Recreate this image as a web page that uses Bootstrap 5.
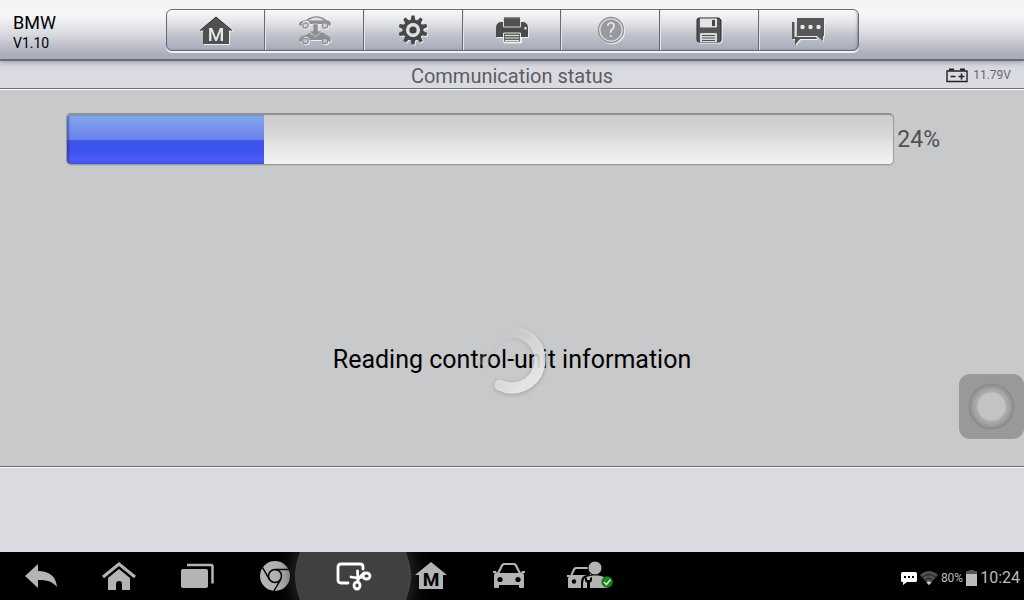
<!DOCTYPE html>
<html lang="en">
<head>
<meta charset="utf-8">
<meta name="viewport" content="width=device-width, initial-scale=1">
<title>BMW – Communication status</title>
<link href="https://cdn.jsdelivr.net/npm/bootstrap@5.3.0/dist/css/bootstrap.min.css" rel="stylesheet">
<style>
  body { font-family: Roboto, "Liberation Sans", sans-serif; background: #c8c9cb; color: #000; }
  svg { display: block; overflow: visible; }
  .topbar { height: 61px; background: linear-gradient(#f4f4f4 0, #f8f8f8 14px, #d9dae0 34px, #acaebd 54px, #a9abbb 59px); border-bottom: 2px solid #6b6b7e; position: relative; z-index: 1; box-shadow: 0 1px 6px rgba(80,80,100,.55); }
  .side { flex: 1 1 0; min-width: 0; }
  .vehicle { padding: 11px 0 0 13px; }
  .vehicle-name { font-size: 18px; line-height: 24px; }
  .vehicle-version { font-size: 14px; line-height: 16px; }
  .tools { flex: 0 1 693px; height: 42px; margin-top: 9px; border: 1px solid #666a73; border-radius: 6px; background: linear-gradient(#fafafa 0, #e4e5e9 12px, #bfc1ca 26px, #a8acb9 40px); box-shadow: 0 2px 0 #eef0f4, inset 0 1px 0 #fff, inset -1px 0 2px rgba(90,90,110,.5); }
  .tools > .tool { flex: 1 1 0; min-width: 0; border: 0; border-radius: 0; padding: 0; display: flex; align-items: center; justify-content: center; }
  .tools > .tool + .tool { border-left: 1px solid #666a73; margin-left: 0; box-shadow: inset 1px 0 0 #e4e6eb; }
  .tools > .tool:disabled { opacity: 1; border-color: #666a73; }
  .tool svg { filter: drop-shadow(1px 1px 0 #eceef2); }
  .subbar { height: 28px; background: #dadbe1; border-bottom: 1px solid #6c7177; box-shadow: 0 1px 0 #fff; font-size: 20px; line-height: 28px; color: #5c5c5f; padding-top: 1px; position: relative; }
  .volt { font-size: 12px; color: #66666a; padding-right: 13px; gap: 5px; }
  .reading { padding: 24px 84px 0 66px; gap: 3px; }
  .meter { height: 52px; border: 1px solid #989a9c; border-top: 2px solid #8e9092; border-radius: 5px; background: linear-gradient(#cbcbcb 0, #dbdbdb 50%, #e0e0e0 52%, #f3f3f3 100%); box-shadow: 0 1px 0 #b5b7b9; }
  .meter .progress-bar { background: linear-gradient(#84a7ea 0, #6e88ec 40%, #6983ee 50%, #3c58e9 51%, #3c51ed 72%, #4c5bf2 90%, #4654ee 100%); box-shadow: inset 2px 0 2px rgba(30,40,110,.45); }
  .percent { font-size: 23px; line-height: 54px; height: 52px; color: #505050; }
  .message { font-size: 25px; line-height: 36px; padding-bottom: 88px; }
  .message-text { position: relative; }
  .loader { position: absolute; left: 50%; top: 50%; transform: translate(-50%, -50%); filter: drop-shadow(0 1px 2px rgba(60,60,60,.35)); }
  .assist { position: absolute; right: 0; bottom: 27px; width: 65px; height: 65px; border: 0; border-radius: 11px; padding: 0; background: #98999b; }
  .lower { height: 86px; background: #dadbe1; border-top: 1px solid #666a70; box-shadow: inset 0 1px 0 #fff; }
  .dock { height: 48px; background: #000; overflow: hidden; padding-left: 2px; color: #b4b4b4; }
  .dock-item { flex: 0 1 78px; height: 48px; border: 0; border-radius: 0; padding: 0; display: flex; align-items: center; justify-content: center; color: inherit; position: relative; }
  .dock-item svg { position: relative; }
  .dock-item.current::before { content: ""; position: absolute; left: 50%; top: 50%; width: 116px; height: 116px; transform: translate(-50%, -50%); border-radius: 50%; background: #404040; border: 1px solid #484848; box-shadow: 0 0 20px 2px #303030; }
  .status { gap: 3px; padding: 3px 4px 0 0; color: #bcbcbc; }
  .status-small { font-size: 12px; line-height: 20px; }
  .clock { font-size: 16px; line-height: 20px; }
</style>
</head>
<body class="d-flex flex-column vh-100 overflow-hidden">
<header class="topbar d-flex align-items-start flex-shrink-0">
  <div class="side">
    <div class="vehicle">
      <div class="vehicle-name">BMW</div>
      <div class="vehicle-version">V1.10</div>
    </div>
  </div>
  <div class="tools btn-group" role="toolbar" aria-label="Tools">
    <button class="btn tool" type="button" aria-label="Home">
      <svg width="34" height="30" viewBox="0 0 34 30"><path d="M17 2 33 15.500h-3V29H4V15.500H1Z" fill="#505050"/><path d="M1 15.500 17 2 33 15.500" fill="none" stroke="#303030"/><text x="17" y="26" text-anchor="middle" font-size="19" font-weight="500" fill="#e8e9ee">M</text></svg>
    </button>
    <button class="btn tool" type="button" aria-label="Vehicle change" disabled>
      <svg width="34" height="30" viewBox="0 0 34 30"><g fill="#8c8e94"><path d="M1 10c0-3 2-4 7-5 6-5 15-5 20 0 4 1 5 2 5 5l-2 1a4 4 0 0 0-7-2H12a4 4 0 0 0-8 2l-3-1Z"/><path d="M10 5.500C15 1.500 22 1.500 26 5.500Z" fill="#dfe0e3"/><circle cx="7.500" cy="10.500" r="2.700" fill="#d2d3d8" stroke="#8c8e94" stroke-width="1.200"/><circle cx="27" cy="10.500" r="2.700" fill="#d2d3d8" stroke="#8c8e94" stroke-width="1.200"/><path d="M1 26c0-3 2-5 7-6 5-4 15-5 20 0 4 1 5 3 5 6l-2 1a4 4 0 0 0-7-2H12a4 4 0 0 0-8 2l-3-1Z"/><path d="M12 20c2-2 4-3 6-3v3Z" fill="#bbbdc4"/><circle cx="7.500" cy="26" r="2.700" fill="#c2c4cc" stroke="#8c8e94" stroke-width="1.200"/><circle cx="27" cy="26" r="2.700" fill="#c2c4cc" stroke="#8c8e94" stroke-width="1.200"/><path d="M15 9h5v7h4l-6.500 6L11 16h4Z" stroke="#d5d6da" stroke-width=".8"/></g></svg>
    </button>
    <button class="btn tool" type="button" aria-label="Settings">
      <svg width="32" height="32" viewBox="-16 -16 32 32"><g fill="#484848"><path id="tooth" d="M-2.500-9-1.500-14.500h3L2.500-9Z"/><use href="#tooth" transform="rotate(36)"/><use href="#tooth" transform="rotate(72)"/><use href="#tooth" transform="rotate(108)"/><use href="#tooth" transform="rotate(144)"/><use href="#tooth" transform="rotate(180)"/><use href="#tooth" transform="rotate(216)"/><use href="#tooth" transform="rotate(252)"/><use href="#tooth" transform="rotate(288)"/><use href="#tooth" transform="rotate(324)"/></g><circle r="8.700" fill="none" stroke="#484848" stroke-width="3.600"/><circle r="6.700" fill="#dddee3"/><circle r="3.600" fill="#404040"/></svg>
    </button>
    <button class="btn tool" type="button" aria-label="Print">
      <svg width="34" height="28" viewBox="0 0 34 28"><path d="M1 21v-9c0-3 1-5 4-6h24c3 1 4 3 4 6v9Z" fill="#4b4b4b"/><path d="M8.500 2h17v9h-17Z" fill="#505050" stroke="#d8dade" stroke-width="1"/><path d="M9 2h16" stroke="#333"/><path d="M8.500 17h17v9h-17Z" fill="#5e625f" stroke="#e3e7e2"/><path d="M10 19.500h14M10 22h14M10 24.500h14" stroke="#e3e7e2"/><rect x="29.500" y="11" width="2" height="2.500" fill="#eee"/></svg>
    </button>
    <button class="btn tool" type="button" aria-label="Help" disabled>
      <svg width="30" height="30" viewBox="0 0 30 30"><circle cx="15" cy="15" r="12.500" fill="#dfe0e3" stroke="#92949a" stroke-width="1.400"/><circle cx="15" cy="15" r="10.500" fill="#97999f"/><text x="15" y="22" text-anchor="middle" font-size="20" fill="#e5e6e9">?</text></svg>
    </button>
    <button class="btn tool" type="button" aria-label="Save">
      <svg width="26" height="28" viewBox="0 0 26 28"><path d="M3 2h20l2 2v20q0 2-2 2H3q-2 0-2-2V4q0-2 2-2Z" fill="#555" stroke="#292929"/><path d="M4 2.500h17v8q0 1-1 1H5q-1 0-1-1Z" fill="#e3e4e7"/><path d="M16 4h3v6h-3Z" fill="#484848"/><path d="M4 18q0-1 1-1h15q1 0 1 1v8H4Z" fill="#d7d9de"/><path d="M6 19.500h13M6 22h13M6 24.500h13" stroke="#505050"/></svg>
    </button>
    <button class="btn tool" type="button" aria-label="Messages">
      <svg width="34" height="32" viewBox="0 0 34 32"><path d="M1 8h2.500v15H25l1 2H9l-5 6v-6H1Z" fill="#555"/><path d="M6 4h27v18h-1v5l-6-5H6Z" fill="#575757"/><g fill="#e8e9ec"><circle cx="11.500" cy="13" r="2.200"/><circle cx="19.500" cy="13" r="2.200"/><circle cx="27.500" cy="13" r="2.200"/></g></svg>
    </button>
  </div>
  <div class="side"></div>
</header>
<div class="subbar flex-shrink-0 text-center">
  Communication status
  <div class="volt position-absolute end-0 top-0 d-flex align-items-center">
    <svg width="22" height="15" viewBox="0 0 22 15"><path d="M1 3h20v10.500H1Z" fill="none" stroke="#222" stroke-width="1.400"/><path d="M3 1.500h5M14 1.500h5" stroke="#222" stroke-width="2"/><path d="M4.500 8.500h5M12.500 8.500h6M15.500 5.500v6" stroke="#222" stroke-width="1.600"/></svg>
    <span>11.79V</span>
  </div>
</div>
<main class="flex-grow-1 d-flex flex-column position-relative">
  <div class="reading d-flex">
    <div class="progress meter flex-grow-1" role="progressbar" aria-label="Communication progress" aria-valuenow="24" aria-valuemin="0" aria-valuemax="100">
      <div class="progress-bar" style="width:23.8%"></div>
    </div>
    <div class="percent">24%</div>
  </div>
  <div class="message mt-auto text-center">
    <div class="message-text">Reading control-unit information
      <svg class="loader" width="68" height="68" viewBox="0 0 68 68" role="img" aria-label="Loading">
        <defs><linearGradient id="sweep" gradientUnits="userSpaceOnUse" x1="6" y1="22" x2="42" y2="62"><stop offset="0" stop-color="#eee" stop-opacity="0"/><stop offset=".5" stop-color="#eaeaea" stop-opacity=".65"/><stop offset="1" stop-color="#eaeaea" stop-opacity=".92"/></linearGradient></defs>
        <path d="M6 34A28 28 0 1 1 22 59.300" fill="none" stroke="url(#sweep)" stroke-width="11" stroke-linecap="round"/>
      </svg>
    </div>
  </div>
  <button class="assist" type="button" aria-label="Assistive touch">
    <svg width="65" height="65" viewBox="0 0 65 65"><circle cx="32.500" cy="32.500" r="23" fill="#8b8c8e"/><circle cx="32.500" cy="32.500" r="21" fill="#98999b"/><circle cx="32.500" cy="32.500" r="18.500" fill="#a5a6a7"/><circle cx="32.500" cy="32.500" r="15.500" fill="#afb0b1"/><circle cx="32.500" cy="32.500" r="14" fill="#c2c3c4"/></svg>
  </button>
</main>
<div class="lower flex-shrink-0"></div>
<nav class="dock d-flex flex-shrink-0" aria-label="System">
  <button class="btn dock-item" type="button" aria-label="Back"><svg width="34" height="26" viewBox="0 0 34 26"><path d="M1 13 14 1v7c11 0 18 5 19 16-5-6-10-7-19-7v8Z" fill="currentColor"/></svg></button>
  <button class="btn dock-item" type="button" aria-label="Home screen"><svg width="36" height="30" viewBox="0 0 36 30"><path d="M2 16 18 3l16 13" fill="none" stroke="currentColor" stroke-width="3"/><path d="M7 17 18 8l11 9v12h-8v-6a3 3 0 0 0-6 0v6H7Z" fill="currentColor"/></svg></button>
  <button class="btn dock-item" type="button" aria-label="Recent apps"><svg width="34" height="26" viewBox="0 0 34 26"><rect x="1" y="6" width="27" height="19" rx="2" fill="currentColor"/><path d="M7 2h24q1.500 0 1.500 1.500v17" fill="none" stroke="currentColor" stroke-width="2.500"/></svg></button>
  <button class="btn dock-item" type="button" aria-label="Browser"><svg width="30" height="30" viewBox="-15 -15 30 30"><circle r="15" fill="currentColor"/><circle r="6.500" fill="none" stroke="#000" stroke-width="1.500"/><path d="M0-6.500H14M-5.700 3.300-12.500-8.500M5.700 3.300-1 15" fill="none" stroke="#000" stroke-width="1.500"/></svg></button>
  <button class="btn dock-item current" type="button" aria-label="Screenshot"><svg width="36" height="30" viewBox="0 0 36 30" fill="none" stroke="#fff" stroke-width="2.800" stroke-linecap="round"><path d="M13 22H6q-3 0-3-3V6q0-3 3-3h19q3 0 3 3v2"/><path d="M16 16c4 1 8 1 12 0M22.500 10l.5 10" stroke-width="2.800"/><ellipse cx="31.500" cy="15" rx="3.500" ry="3"/><ellipse cx="22" cy="24.500" rx="3" ry="3.500"/><path d="m23 18 6-6"/></svg></button>
  <button class="btn dock-item" type="button" aria-label="Diagnostics home"><svg width="32" height="28" viewBox="0 0 32 28"><path d="M16 0 32 13h-4v14H4V13H0Z" fill="currentColor"/><text x="16" y="24" text-anchor="middle" font-size="19" font-weight="700" fill="#000">M</text></svg></button>
  <button class="btn dock-item" type="button" aria-label="Vehicle"><svg width="34" height="28" viewBox="0 0 34 28"><path d="M5 11 9 3q1-2 3-2h10q2 0 3 2l4 8 1-2h3v2h-2q1 1 1 3v11q0 1-1 1h-3q-1 0-1-1v-2H7v2q0 1-1 1H3q-1 0-1-1V14q0-2 1-3H1V9h3Z" fill="currentColor"/><path d="M7.500 11 11 4q.5-1 1.500-1h9q1 0 1.500 1l3.500 7Z" fill="#000"/><circle cx="8" cy="17.500" r="2.600" fill="#000"/><circle cx="26" cy="17.500" r="2.600" fill="#000"/></svg></button>
  <button class="btn dock-item" type="button" aria-label="Service user"><svg width="52" height="30" viewBox="-6 0 52 30"><path d="M3 15 6 8q1-2 3-2h15v21H2q-1 0-1-1V17l1-1H0v-2h3Z" fill="currentColor"/><path d="M5.500 14 8 9q.5-1 1.500-1H23v6Z" fill="#000"/><circle cx="7" cy="20.500" r="2.200" fill="#000"/><path d="M14 28v-7q0-6 6-7h14q5 1 6 7v7Z" fill="#000"/><path d="M16 27v-5q0-6 7-7l5-1 6 1q5 1 6 7v5Z" fill="currentColor"/><circle cx="28" cy="7" r="7" fill="currentColor" stroke="#000"/><path d="M18 16v3q0 2 2 2.500V28h3v-6.500q2-.5 2-2.500v-3l-2 1v2h-3v-2Z" fill="#000"/><circle cx="40" cy="21" r="5.800" fill="#16851d"/><path d="m37 21 2.500 2.500 4-5" fill="none" stroke="#ddd" stroke-width="1.600"/></svg></button>
  <div class="status ms-auto d-flex align-items-center">
    <svg width="16" height="14" viewBox="0 0 16 14" role="img" aria-label="New message"><path d="M1.500 1h13q1.500 0 1.500 1.500v7q0 1.500-1.500 1.500H6l-4 3v-3h-.5Q0 11 0 9.500v-7Q0 1 1.500 1Z" fill="#fff"/><path d="M3 5h2v2H3Zm4 0h2v2H7Zm4 0h2v2h-2Z" fill="#000"/></svg>
    <svg width="18" height="14" viewBox="0 0 18 14" role="img" aria-label="Wi-Fi"><path d="M0 4Q9-4 18 4L9 14Z" fill="#505050"/><path d="M2 6.500q7-6 14 0M4.500 9.500q4.500-4 9 0" fill="none" stroke="#000" stroke-width=".6"/><path d="M6.500 11.500q2.500-2 5 0L9 14Z" fill="#ccc"/></svg>
    <span class="status-small">80%</span>
    <svg width="11" height="16" viewBox="0 0 11 16" role="img" aria-label="Battery"><path d="M3 0h5v2h3v14H0V2h3Z" fill="#bcbcbc"/><path d="M3 0h5v1h3v3H0V1h3Z" fill="#555"/></svg>
    <span class="clock">10:24</span>
  </div>
</nav>
<script src="https://cdn.jsdelivr.net/npm/bootstrap@5.3.0/dist/js/bootstrap.bundle.min.js"></script>
</body>
</html>
